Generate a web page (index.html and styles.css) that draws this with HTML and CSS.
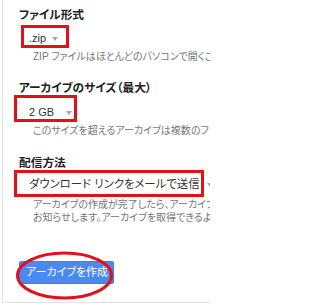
FILE: index.html
```html
<!DOCTYPE html>
<html lang="ja">
<head>
<meta charset="utf-8">
<link rel="stylesheet" href="styles.css">
</head>
<body>
<div class="panel">
  <section class="field">
    <h3 class="field-title">ファイル形式</h3>
    <div class="select-row">
      <div class="select select-zip"><span class="select-value">.zip</span><span class="caret"></span></div>
      <span class="mark mark-zip"></span>
    </div>
    <p class="hint">ZIP ファイルはほとんどのパソコンで開くことができます。</p>
  </section>
  <section class="field field-size">
    <h3 class="field-title">アーカイブのサイズ（最大）</h3>
    <div class="select-row select-row-size">
      <div class="select select-size"><span class="select-value">2 GB</span><span class="caret"></span></div>
      <span class="mark mark-size"></span>
    </div>
    <p class="hint">このサイズを超えるアーカイブは複数のファイルに分割されます。</p>
  </section>
  <section class="field field-delivery">
    <h3 class="field-title">配信方法</h3>
    <div class="select-row select-row-delivery">
      <div class="select select-delivery"><span class="select-value">ダウンロード リンクをメールで送信</span><span class="caret"></span></div>
      <span class="mark mark-delivery"></span>
    </div>
    <p class="hint hint-multi"><span class="hint-line">アーカイブの作成が完了したら、アーカイブのダウンロード リンクをメールで</span><span class="hint-line">お知らせします。アーカイブを取得できるようになるまで数時間から数日かかることがあります。</span></p>
  </section>
  <div class="actions">
    <button class="btn-primary" type="button">アーカイブを作成</button>
    <svg class="ring" width="99" height="49" viewBox="0 0 99 49" aria-hidden="true">
      <ellipse cx="49.5" cy="24.5" rx="47" ry="22.5" fill="none" stroke="#e3101b" stroke-width="3"/>
    </svg>
  </div>
</div>
</body>
</html>
```
FILE: styles.css
```css
html, body {
  margin: 0;
  padding: 0;
  background: #fff;
  overflow: hidden;
}
body {
  width: 210px;
  height: 306px;
  font-family: "Liberation Sans", "Noto Sans CJK JP", sans-serif;
  font-feature-settings: "palt";
  color: #222;
}
.panel {
  box-sizing: border-box;
  margin-left: 2px;
  width: 208px;
  height: 303px;
  overflow: hidden;
  border-left: 1px solid #e3e3e3;
  border-bottom: 1px solid #e3e3e3;
  padding: 7px 0 0 16px;
}
.field-title {
  margin: 0;
  font-size: 11.7px;
  line-height: 16px;
  font-weight: bold;
  color: #222;
}
.field-size { margin-top: 17px; }
.field-delivery { margin-top: 18px; }
.select-row {
  position: relative;
  margin-top: 3px;
  height: 24px;
}
.select-row-size { margin-top: 4px; }
.select-row-delivery { margin-top: 1px; }
.select {
  display: flex;
  align-items: center;
  height: 24px;
  padding-left: 10px;
  font-size: 11px;
  line-height: 24px;
  color: #333;
  white-space: nowrap;
}
.select-delivery .select-value { font-size: 11.4px; }
.caret {
  flex: none;
  width: 0;
  height: 0;
  border-left: 3.5px solid transparent;
  border-right: 3.5px solid transparent;
  border-top: 4px solid #a6a6a6;
  margin-left: 6px;
  margin-top: 1px;
}
.select-size .caret { margin-left: 12px; }
.select-delivery .caret { margin-left: 7px; }
.mark {
  position: absolute;
  box-sizing: border-box;
  border: 3px solid #e3101b;
}
.mark-zip { left: 2px; top: -1px; width: 48px; height: 23px; }
.mark-size { left: -5px; top: -5px; width: 63px; height: 27px; }
.mark-delivery { left: -5px; top: -2px; width: 190px; height: 27px; }
.hint {
  margin: 0;
  padding-left: 14px;
  font-size: 10px;
  line-height: 13px;
  color: #777;
  white-space: nowrap;
  overflow: hidden;
  text-overflow: clip;
}
.hint-multi { margin-top: 2px; }
.hint-line { display: block; }
.actions {
  position: relative;
  margin-top: 37px;
  width: 95px;
  height: 23px;
}
.btn-primary {
  display: block;
  box-sizing: border-box;
  width: 95px;
  height: 23px;
  margin: 0;
  padding: 0 0 0 6px;
  border: 1px solid #3f7fe6;
  border-radius: 2px;
  background: #4a89f0;
  color: #fff;
  font-family: inherit;
  font-feature-settings: "palt";
  font-size: 11px;
  line-height: 21px;
  text-align: left;
  white-space: nowrap;
}
.ring {
  position: absolute;
  left: -4px;
  top: -10px;
}
```
